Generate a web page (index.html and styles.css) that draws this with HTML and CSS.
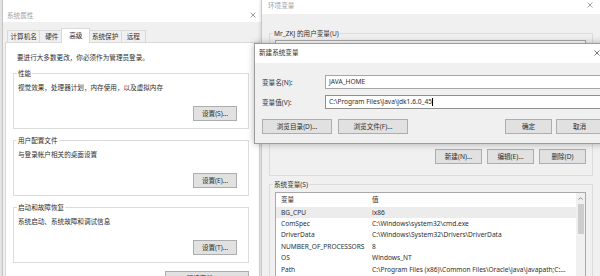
FILE: index.html
```html
<!DOCTYPE html>
<html lang="zh-CN">
<head>
<meta charset="utf-8">
<title>环境变量</title>
<link rel="stylesheet" href="styles.css">
</head>
<body>
<div class="desk">

  <div class="win sysprop">
    <div class="titlebar">
      <span class="title">系统属性</span>
      <span class="close"><svg width="6" height="6" viewBox="0 0 6 6"><path d="M0.5 0.5L5.5 5.5M5.5 0.5L0.5 5.5" stroke="#8a8a8a" stroke-width="0.8" fill="none"/></svg></span>
    </div>
    <div class="tabs">
      <span class="tab">计算机名</span>
      <span class="tab">硬件</span>
      <span class="tab tab-active">高级</span>
      <span class="tab">系统保护</span>
      <span class="tab">远程</span>
    </div>
    <div class="panel">
      <p class="note">要进行大多数更改，你必须作为管理员登录。</p>
      <div class="group">
        <span class="group-label">性能</span>
        <p>视觉效果，处理器计划，内存使用，以及虚拟内存</p>
        <button class="btn btn-set">设置(S)...</button>
      </div>
      <div class="group">
        <span class="group-label">用户配置文件</span>
        <p>与登录帐户相关的桌面设置</p>
        <button class="btn btn-set">设置(E)...</button>
      </div>
      <div class="group">
        <span class="group-label">启动和故障恢复</span>
        <p>系统启动、系统故障和调试信息</p>
        <button class="btn btn-set">设置(T)...</button>
      </div>
      <button class="btn btn-env">环境变量(N)...</button>
    </div>
  </div>

  <div class="win env">
    <div class="titlebar env-titlebar">
      <span class="title">环境变量</span>
      <span class="close"><svg width="6" height="6" viewBox="0 0 6 6"><path d="M0.5 0.5L5.5 5.5M5.5 0.5L0.5 5.5" stroke="#8a8a8a" stroke-width="0.8" fill="none"/></svg></span>
    </div>
    <div class="env-body">
      <div class="group env-group user-group">
        <span class="group-label">Mr_ZKJ 的用户变量(U)</span>
        <div class="listbox user-list"></div>
        <div class="btn-row">
          <button class="btn btn-mid">新建(N)...</button>
          <button class="btn btn-mid">编辑(E)...</button>
          <button class="btn btn-mid">删除(D)</button>
        </div>
      </div>
      <div class="group env-group sys-group">
        <span class="group-label">系统变量(S)</span>
        <div class="listbox sys-list">
          <div class="list-main">
            <div class="row head"><span>变量</span><span>值</span></div>
            <div class="row selected"><span>BG_CPU</span><span>ix86</span></div>
            <div class="row"><span>ComSpec</span><span>C:\Windows\system32\cmd.exe</span></div>
            <div class="row"><span>DriverData</span><span>C:\Windows\System32\Drivers\DriverData</span></div>
            <div class="row"><span>NUMBER_OF_PROCESSORS</span><span>8</span></div>
            <div class="row"><span>OS</span><span>Windows_NT</span></div>
            <div class="row"><span>Path</span><span>C:\Program Files (x86)\Common Files\Oracle\Java\javapath;C:...</span></div>
          </div>
          <div class="scrollbar">
            <span class="arrow"><svg width="5" height="3" viewBox="0 0 5 3"><path d="M0.5 2.6L2.5 0.6L4.5 2.6" stroke="#606060" stroke-width="0.7" fill="none"/></svg></span>
            <span class="thumb"></span>
          </div>
        </div>
      </div>
    </div>
  </div>

  <div class="win dialog">
    <div class="titlebar dlg-titlebar">
      <span class="title dlg-title">新建系统变量</span>
      <span class="close"><svg width="6" height="6" viewBox="0 0 6 6"><path d="M0.5 0.5L5.5 5.5M5.5 0.5L0.5 5.5" stroke="#555" stroke-width="0.8" fill="none"/></svg></span>
    </div>
    <div class="dlg-body">
      <div class="field">
        <label class="field-label">变量名(N):</label>
        <div class="input">JAVA_HOME</div>
      </div>
      <div class="field">
        <label class="field-label">变量值(V):</label>
        <div class="input input-focus">C:\Program Files\Java\jdk1.6.0_45<span class="caret"></span></div>
      </div>
      <div class="dlg-buttons">
        <button class="btn btn-wide">浏览目录(D)...</button>
        <button class="btn btn-wide">浏览文件(F)...</button>
        <button class="btn btn-mid btn-ok">确定</button>
        <button class="btn btn-mid">取消</button>
      </div>
    </div>
  </div>

</div>
</body>
</html>
```
FILE: styles.css
```css
* { box-sizing: border-box; margin: 0; padding: 0; }
html, body { width: 600px; height: 276px; overflow: hidden; }
body {
  background: #e2e2e2;
  font-family: "Noto Sans", "Noto Sans CJK SC", sans-serif;
  font-size: 6.6px;
  line-height: 9px;
  color: #2e2e2e;
}
.desk { position: relative; width: 600px; height: 276px; overflow: hidden; }

.win {
  position: absolute;
  background: #f0f0f0;
  display: flex;
  flex-direction: column;
}
.titlebar {
  background: #fff;
  display: flex;
  align-items: flex-start;
  flex-shrink: 0;
}
.title { color: #a0a0a0; white-space: nowrap; }
.close {
  margin-left: auto;
  width: 18px;
  height: 9px;
  display: flex;
  align-items: center;
  justify-content: center;
}

/* ---------- 系统属性 ---------- */
.sysprop {
  left: 2px; top: 0;
  width: 260px; height: 300px;
  border-left: 1px solid #c4c4c4;
}
.sysprop .titlebar { height: 22px; padding: 10.5px 0 0 4px; }

.tabs {
  height: 20px;
  display: flex;
  align-items: flex-end;
  padding-left: 4px;
  position: relative;
  z-index: 1;
}
.tab {
  height: 12px;
  min-width: 25px;
  padding: 0 2.5px;
  border: 1px solid #d9d9d9;
  border-bottom: none;
  margin-right: -1px;
  line-height: 11px;
  text-align: center;
  white-space: nowrap;
  background: #f0f0f0;
}
.tab-active {
  height: 15px;
  min-width: 29px;
  margin: 0 -2px -1px -2px;
  background: #fff;
  line-height: 13px;
  position: relative;
}

.panel {
  flex: 1;
  background: #fff;
  border: 1px solid #d9d9d9;
  margin: 0 2px;
  padding: 10px 10px 0 7px;
  display: flex;
  flex-direction: column;
}
.note { margin-left: 4px; margin-bottom: 11px; white-space: nowrap; }

.group {
  position: relative;
  border: 1px solid #dcdcdc;
  display: flex;
  flex-direction: column;
}
.panel .group {
  height: 56px;
  padding: 8.5px 11px 7.5px 4px;
  margin-bottom: 11px;
}
.panel .group p { white-space: nowrap; }
.group-label {
  position: absolute;
  top: -5px;
  left: 3px;
  padding: 0 1px;
  background: #fff;
  white-space: nowrap;
  line-height: 9px;
}

.btn {
  font: inherit;
  color: #2e2e2e;
  background: #e1e1e1;
  border: 1px solid #adadad;
  height: 15px;
  line-height: 13px;
  text-align: center;
  white-space: nowrap;
  flex-shrink: 0;
}
.btn-set { width: 44px; margin-top: auto; align-self: flex-end; }
.btn-env { width: 84px; align-self: flex-end; margin-top: -3px; }
.btn-mid { width: 47px; }
.btn-wide { width: 70px; }

/* ---------- 环境变量 ---------- */
.env {
  left: 261px; top: 0;
  width: 345px; height: 300px;
  border-left: 1px solid #c8c8c8;
  box-shadow: -1px 0 3px rgba(0, 0, 0, 0.12);
}
.env-titlebar { height: 14px; padding: 0.5px 0 0 6px; }
.env-titlebar .close { margin-right: 8px; width: 16px; }
.env-body {
  padding: 19px 13px 0 7px;
  display: flex;
  flex-direction: column;
}
.env-group .group-label { background: #f0f0f0; left: 3px; }
.user-group {
  height: 143px;
  padding: 6px 6px 0 5px;
  margin-bottom: 8px;
}
.user-list { height: 103px; }
.btn-row {
  display: flex;
  justify-content: flex-end;
  gap: 5px;
  margin-top: 6px;
}
.sys-group {
  height: 120px;
  padding: 7px 6px 0 5px;
}
.listbox {
  background: #fff;
  border: 1px solid #a9a9a9;
  display: flex;
}
.sys-list { height: 110px; }
.list-main { flex: 1; min-width: 0; }
.row {
  display: grid;
  grid-template-columns: 91px 1fr;
  height: 11.4px;
  line-height: 11.4px;
  padding-left: 5px;
  white-space: nowrap;
}
.row span { overflow: hidden; }
.row.head { height: 13.6px; line-height: 13px; }
.row.selected { background: #ececec; }
.scrollbar {
  width: 9px;
  background: #f0f0f0;
  display: flex;
  flex-direction: column;
  align-items: center;
}
.arrow {
  height: 11px;
  display: flex;
  align-items: center;
  justify-content: center;
}
.thumb {
  width: 6px;
  height: 30px;
  background: #cdcdcd;
}

/* ---------- 新建系统变量 ---------- */
.dialog {
  left: 254px; top: 43px;
  width: 352px; height: 101px;
  border: 1px solid #9c9c9c;
  box-shadow: 0 0 7px rgba(0, 0, 0, 0.28);
  z-index: 2;
}
.dlg-titlebar { height: 19px; padding: 4px 0 0 4px; }
.dlg-title { color: #2e2e2e; }
.dlg-titlebar .close { width: 16px; }
.dlg-body {
  flex: 1;
  padding: 12px 2px 0 7px;
  display: flex;
  flex-direction: column;
}
.field {
  display: flex;
  align-items: center;
  height: 14px;
  margin-bottom: 6px;
  padding-right: 1px;
}
.field-label { width: 63px; flex-shrink: 0; white-space: nowrap; }
.input {
  flex: 1;
  height: 14px;
  background: #fff;
  border: 1px solid #a6a6a6;
  padding-left: 3px;
  line-height: 12px;
  white-space: nowrap;
}
.input-focus { border-color: #8f8f8f; }
.caret {
  display: inline-block;
  width: 1px;
  height: 8px;
  background: #000;
  vertical-align: -1.5px;
}
.dlg-buttons {
  display: flex;
  margin-top: 4px;
  gap: 6px;
}
.btn-ok { margin-left: auto; margin-right: -2px; }
```
